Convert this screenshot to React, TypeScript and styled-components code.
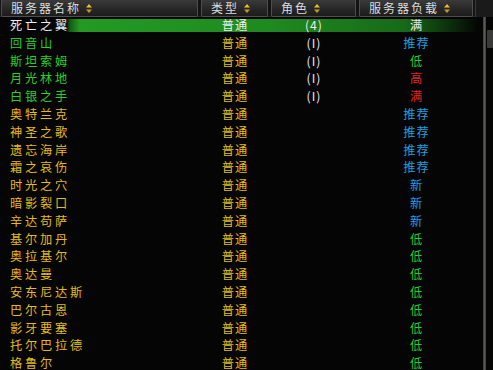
import { createGlobalStyle, styled } from "styled-components";

const GlobalStyle = createGlobalStyle`
  html, body {
    margin: 0;
    padding: 0;
    background: #040404;
  }
  body {
    font-family: "Noto Sans CJK SC", "Noto Sans", sans-serif;
  }
`;

const COLS = "200px 70px 88px 117px 18px";

const Frame = styled.div`
  width: 493px;
  height: 370px;
  overflow: hidden;
  background: #050505;
  position: relative;
`;

const HeaderBar = styled.div`
  display: grid;
  grid-template-columns: ${COLS};
  height: 17px;
  background: #141414;
  border-bottom: 1px solid #2a2a2a;
  box-sizing: border-box;
`;

const HeaderCell = styled.div`
  display: flex;
  align-items: center;
  gap: 5px;
  padding-left: 9px;
  margin: 0 2px 0 1px;
  background: linear-gradient(#3a3a3a, #262626 60%, #1c1c1c);
  border: 1px solid #4e4e4e;
  border-top: none;
  border-radius: 0 0 2px 2px;
  color: #dcdcdc;
  font-size: 12px;
  letter-spacing: 2px;
  line-height: 16px;
  white-space: nowrap;
`;

const HeaderCorner = styled.div`
  background: #1a1a1a;
  border-left: 1px solid #3a3a3a;
`;

const Rows = styled.div`
  display: flex;
  flex-direction: column;
`;

const Row = styled.div<{ $selected?: boolean }>`
  display: grid;
  grid-template-columns: ${COLS};
  height: 17.8px;
  align-items: center;
  font-size: 12.2px;
  letter-spacing: 1px;
  line-height: 17.8px;
  white-space: nowrap;
  background: ${(p) =>
    p.$selected
      ? "linear-gradient(to right, transparent 0, transparent 66px, #145c14 70px, #239a23 80px, #1f8a1f 55%, #176a17 82%, #0a2a0a 92%, transparent 97%) center / 100% 13px no-repeat"
      : "transparent"};
`;

const NameCell = styled.div<{ $color: string }>`
  padding-left: 10px;
  letter-spacing: 2.8px;
  color: ${(p) => p.$color};
`;

const CenterCell = styled.div<{ $color: string }>`
  text-align: center;
  color: ${(p) => p.$color};
`;

const ScrollCell = styled.div`
  align-self: stretch;
`;

const ScrollTrack = styled.div`
  position: absolute;
  top: 17px;
  bottom: 0;
  left: 483px;
  width: 3px;
  background: linear-gradient(to right, #3a3a3a, #5a5a55, #3a3a3a);
`;

const ScrollThumb = styled.div`
  position: absolute;
  top: 30px;
  left: 487px;
  width: 6px;
  height: 18px;
  background: #3a3a38;
  border-radius: 1px;
`;

const Arrows = () => (
  <svg width="6" height="9" viewBox="0 0 6 9">
    <path d="M3 0 L6 3.6 H0 Z" fill="#e8c030" />
    <path d="M3 9 L6 5.4 H0 Z" fill="#c89a18" />
  </svg>
);

const WHITE = "#ececec";
const GREEN = "#28d028";
const GOLD = "#e6bb1c";
const BLUE = "#1e9ee0";
const RED = "#e02424";
const LOWGREEN = "#22cc33";

type Server = {
  name: string;
  nameColor: string;
  role?: string;
  load: string;
  loadColor: string;
};

const servers: Server[] = [
  { name: "死亡之翼", nameColor: WHITE, role: "(4)", load: "满", loadColor: WHITE },
  { name: "回音山", nameColor: GREEN, role: "(I)", load: "推荐", loadColor: BLUE },
  { name: "斯坦索姆", nameColor: GREEN, role: "(I)", load: "低", loadColor: LOWGREEN },
  { name: "月光林地", nameColor: GREEN, role: "(I)", load: "高", loadColor: RED },
  { name: "白银之手", nameColor: GREEN, role: "(I)", load: "满", loadColor: RED },
  { name: "奥特兰克", nameColor: GOLD, load: "推荐", loadColor: BLUE },
  { name: "神圣之歌", nameColor: GOLD, load: "推荐", loadColor: BLUE },
  { name: "遗忘海岸", nameColor: GOLD, load: "推荐", loadColor: BLUE },
  { name: "霜之哀伤", nameColor: GOLD, load: "推荐", loadColor: BLUE },
  { name: "时光之穴", nameColor: GOLD, load: "新", loadColor: BLUE },
  { name: "暗影裂口", nameColor: GOLD, load: "新", loadColor: BLUE },
  { name: "辛达苟萨", nameColor: GOLD, load: "新", loadColor: BLUE },
  { name: "基尔加丹", nameColor: GOLD, load: "低", loadColor: LOWGREEN },
  { name: "奥拉基尔", nameColor: GOLD, load: "低", loadColor: LOWGREEN },
  { name: "奥达曼", nameColor: GOLD, load: "低", loadColor: LOWGREEN },
  { name: "安东尼达斯", nameColor: GOLD, load: "低", loadColor: LOWGREEN },
  { name: "巴尔古恩", nameColor: GOLD, load: "低", loadColor: LOWGREEN },
  { name: "影牙要塞", nameColor: GOLD, load: "低", loadColor: LOWGREEN },
  { name: "托尔巴拉德", nameColor: GOLD, load: "低", loadColor: LOWGREEN },
  { name: "格鲁尔", nameColor: GOLD, load: "低", loadColor: LOWGREEN },
];

export default function App() {
  return (
    <>
      <GlobalStyle />
      <Frame>
        <HeaderBar>
          <HeaderCell>服务器名称<Arrows /></HeaderCell>
          <HeaderCell>类型<Arrows /></HeaderCell>
          <HeaderCell>角色<Arrows /></HeaderCell>
          <HeaderCell>服务器负载<Arrows /></HeaderCell>
          <HeaderCorner />
        </HeaderBar>
        <Rows>
          {servers.map((s, i) => (
            <Row key={s.name} $selected={i === 0}>
              <NameCell $color={s.nameColor}>{s.name}</NameCell>
              <CenterCell $color={i === 0 ? WHITE : GOLD}>普通</CenterCell>
              <CenterCell $color={WHITE}>{s.role ?? ""}</CenterCell>
              <CenterCell $color={s.loadColor}>{s.load}</CenterCell>
              <ScrollCell />
            </Row>
          ))}
        </Rows>
        <ScrollTrack />
        <ScrollThumb />
      </Frame>
    </>
  );
}
